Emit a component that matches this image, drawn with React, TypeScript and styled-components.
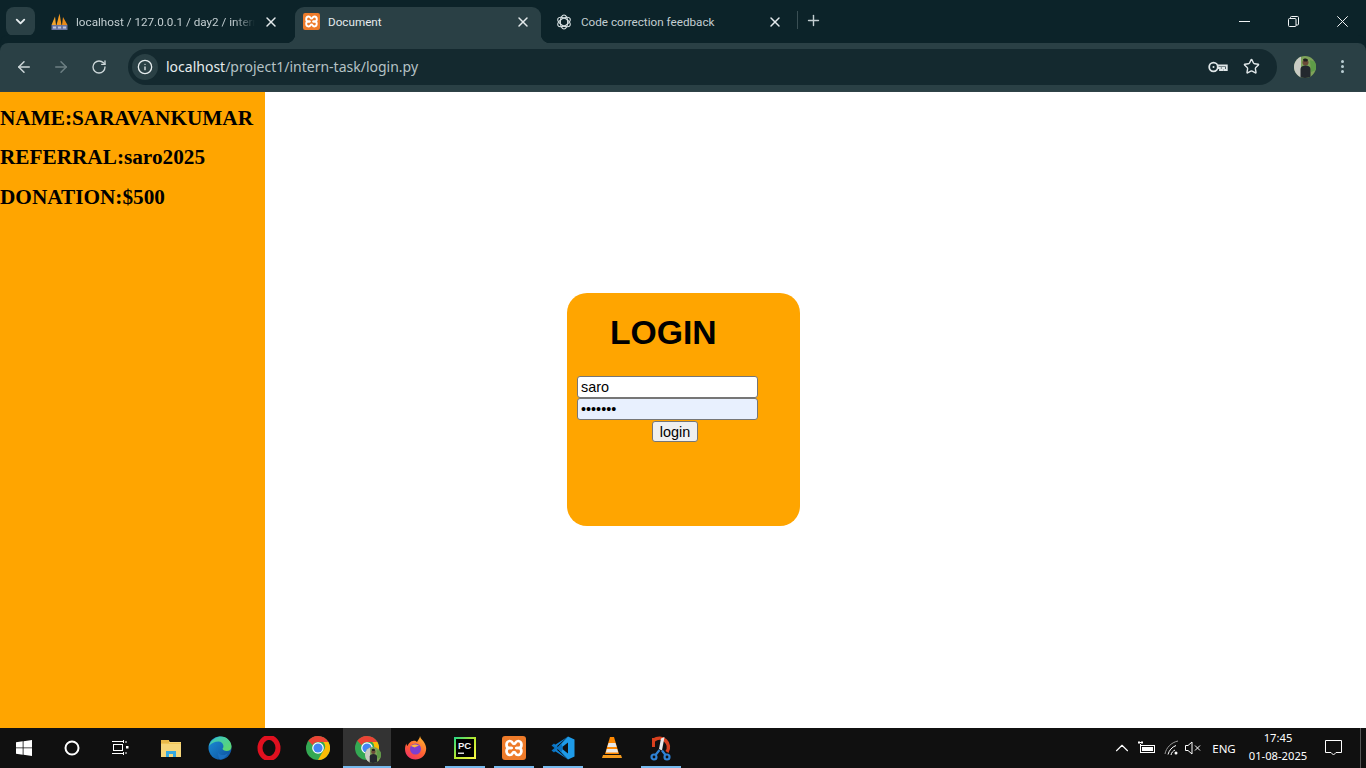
import React from "react";
import styled, { createGlobalStyle } from "styled-components";
import { ArrowLeft, ArrowRight, RotateCw, Info, Star, X, Plus, ChevronDown, ChevronUp } from "lucide-react";

const Global = createGlobalStyle`
  html, body { margin: 0; padding: 0; height: 100%; overflow: hidden; background: #fff; }
  #root { height: 100%; }
`;

const Shell = styled.div`
  width: 1366px;
  height: 768px;
  display: flex;
  flex-direction: column;
  font-family: "Noto Sans", "Open Sans", sans-serif;
`;

const TabStrip = styled.div`
  height: 43px;
  flex: none;
  background: #0c2329;
  display: flex;
  align-items: flex-end;
  padding-left: 6px;
  color: #d7e0e2;
`;

const TabSearch = styled.button`
  width: 29px;
  height: 29px;
  margin: 0 5px 7px 0;
  border: 0;
  padding: 0;
  border-radius: 8px;
  background: #2a4045;
  color: #e6ecee;
  display: flex;
  align-items: center;
  justify-content: center;
`;

const Tab = styled.div<{ $active?: boolean; $w: number; $pad: number; $gap: number; $right: number }>`
  position: relative;
  width: ${(p) => p.$w}px;
  height: 36px;
  box-sizing: border-box;
  padding: 0 ${(p) => p.$right}px 7px ${(p) => p.$pad}px;
  display: flex;
  align-items: center;
  gap: ${(p) => p.$gap}px;
  border-radius: 9px 9px 0 0;
  background: ${(p) => (p.$active ? "#2a4045" : "transparent")};
  color: ${(p) => (p.$active ? "#e4eaec" : "#c3ced1")};
  ${(p) =>
    p.$active
      ? `
    &::before, &::after {
      content: "";
      position: absolute;
      bottom: 0;
      width: 9px;
      height: 9px;
    }
    &::before { left: -9px; background: radial-gradient(circle at 0 0, transparent 9px, #2a4045 9.5px); }
    &::after { right: -9px; background: radial-gradient(circle at 100% 0, transparent 9px, #2a4045 9.5px); }
  `
      : ""}
`;

const TabTitle = styled.span<{ $fade?: boolean }>`
  flex: 1;
  min-width: 0;
  font-family: Roboto, "Noto Sans", sans-serif;
  font-size: 11.7px;
  line-height: 16px;
  white-space: nowrap;
  overflow: hidden;
  ${(p) =>
    p.$fade
      ? `-webkit-mask-image: linear-gradient(to right, #000 88%, transparent 100%); mask-image: linear-gradient(to right, #000 88%, transparent 100%);`
      : ""}
`;

const TabClose = styled.span`
  flex: none;
  width: 16px;
  height: 16px;
  display: flex;
  align-items: center;
  justify-content: center;
  color: #e4eaec;
`;

const TabDivider = styled.span`
  width: 1px;
  height: 18px;
  margin: 0 0 14px 2px;
  background: #3a4f54;
`;

const NewTab = styled.span`
  width: 30px;
  height: 18px;
  margin-bottom: 14px;
  display: flex;
  align-items: center;
  justify-content: center;
  color: #c3ced1;
`;

const WindowControls = styled.div`
  margin-left: auto;
  margin-right: -1px;
  height: 43px;
  display: flex;
  color: #f0f3f4;
`;

const WinButton = styled.span`
  width: 49px;
  height: 42px;
  display: flex;
  align-items: center;
  justify-content: center;
`;

const Toolbar = styled.div`
  height: 49px;
  flex: none;
  box-sizing: border-box;
  background: #2a4045;
  border-bottom: 1px solid #2f4247;
  border-radius: 8px 8px 0 0;
  box-shadow: 0 -8px 0 #0c2329;
  display: flex;
  align-items: center;
  padding: 0 0 1px 5px;
  color: #d0d9db;
`;

const NavButton = styled.span<{ $dim?: boolean }>`
  width: 37.5px;
  height: 34px;
  display: flex;
  align-items: center;
  justify-content: center;
  color: ${(p) => (p.$dim ? "#6d7f83" : "#cdd7d9")};
`;

const Omnibox = styled.div`
  margin-left: 10.5px;
  width: 1149px;
  height: 36px;
  flex: none;
  background: #14292f;
  border-radius: 18px;
  display: flex;
  align-items: center;
  padding: 0 17px 0 4px;
  box-sizing: border-box;
`;

const SiteInfo = styled.span`
  width: 26px;
  height: 26px;
  border-radius: 50%;
  background: #2a4045;
  color: #e6ecee;
  display: flex;
  align-items: center;
  justify-content: center;
`;

const Url = styled.span`
  margin-left: 8px;
  font-size: 14px;
  color: #e6ecee;
  flex: 1;
  small { font-size: inherit; color: #b5c2c5; }
`;

const OmniIcons = styled.span`
  display: flex;
  align-items: center;
  gap: 15px;
  color: #dfe6e8;
`;

const Avatar = styled.span`
  margin-left: 17px;
  width: 22px;
  height: 22px;
  border-radius: 50%;
  overflow: hidden;
  flex: none;
  display: block;
`;

const Kebab = styled.span`
  margin-left: 25px;
  display: flex;
  flex-direction: column;
  gap: 2px;
  i { display: block; width: 3px; height: 3px; border-radius: 50%; background: #b9cdd2; }
`;

const Page = styled.div`
  flex: 1;
  min-height: 0;
  display: flex;
  background: #fff;
`;

const Sidebar = styled.aside`
  width: 265px;
  flex: none;
  background: orange;
  box-sizing: border-box;
  padding-top: 14px;
  font-family: "Liberation Serif", "Times New Roman", serif;
  h3 {
    margin: 0 0 15.4px;
    font-size: 21.25px;
    line-height: 24px;
    font-weight: 700;
    color: #000;
    white-space: nowrap;
  }
`;

const Main = styled.main`
  flex: 1;
  padding: 201px 0 0 302px;
`;

const LoginCard = styled.form`
  width: 233px;
  height: 233px;
  box-sizing: border-box;
  background: orange;
  border-radius: 20px;
  padding: 0 10px;
  font-family: "Liberation Sans", Arial, sans-serif;
  h1 {
    margin: 0;
    padding: 19px 0 0 33px;
    height: 83px;
    box-sizing: border-box;
    font-size: 33.7px;
    line-height: 40px;
    font-weight: 700;
    color: #000;
  }
`;

const Field = styled.input<{ $filled?: boolean }>`
  display: block;
  box-sizing: border-box;
  width: 181px;
  height: 22px;
  margin: 0;
  padding: 1px 3px;
  border: 1px solid #767676;
  border-radius: 3px;
  background: ${(p) => (p.$filled ? "#e8f0fe" : "#fff")};
  font-family: "Liberation Sans", Arial, sans-serif;
  font-size: 14.4px;
  color: #000;
  outline: none;
`;

const Submit = styled.button`
  display: block;
  box-sizing: border-box;
  width: 46px;
  height: 21px;
  margin: 1px 0 0 75px;
  padding: 0;
  border: 1px solid #767676;
  border-radius: 3px;
  background: #efefef;
  font-family: "Liberation Sans", Arial, sans-serif;
  font-size: 14.4px;
  color: #000;
`;

const Taskbar = styled.footer`
  height: 40px;
  flex: none;
  background: #101010;
  display: flex;
  align-items: stretch;
  color: #fff;
`;

const SystemSlot = styled.span<{ $after?: number }>`
  width: 48px;
  margin-right: ${(p) => p.$after ?? 0}px;
  flex: none;
  display: flex;
  align-items: center;
  justify-content: center;
`;

const AppSlot = styled.span<{ $running?: boolean; $active?: boolean }>`
  position: relative;
  width: 48px;
  margin-right: 1px;
  flex: none;
  display: flex;
  align-items: center;
  justify-content: center;
  background: ${(p) => (p.$active ? "#333333" : "transparent")};
  ${(p) =>
    p.$running
      ? `&::after { content: ""; position: absolute; bottom: 0; height: 2px; left: ${p.$active ? 0 : 4}px; right: ${
          p.$active ? 0 : 4
        }px; background: #76b9ed; }`
      : ""}
`;

const Tray = styled.div`
  margin-left: auto;
  display: flex;
  align-items: center;
  font-family: "Noto Sans", sans-serif;
  color: #fff;
`;

const TrayIcon = styled.span<{ $w: number }>`
  width: ${(p) => p.$w}px;
  flex: none;
  display: flex;
  align-items: center;
  justify-content: center;
`;

const Lang = styled.span`
  width: 32px;
  margin: 0 0 0 6px;
  text-align: center;
  font-size: 11.5px;
`;

const Clock = styled.span`
  width: 64px;
  margin: -2px 0 0 6px;
  text-align: center;
  font-size: 11.2px;
  line-height: 18px;
  white-space: nowrap;
`;

const Notify = styled.span`
  width: 28px;
  margin-left: 9px;
  display: flex;
  justify-content: center;
`;

const DesktopEdge = styled.span`
  width: 1px;
  height: 40px;
  margin-left: 13px;
  margin-right: 5px;
  background: #555;
`;

const ProfileWrap = styled.span`
  position: relative;
  display: flex;
`;

const BadgeFace = styled.span`
  position: absolute;
  right: -2px;
  bottom: -3px;
  width: 16px;
  height: 16px;
  border-radius: 50%;
  overflow: hidden;
  svg { width: 16px; height: 16px; display: block; }
`;

const XamppIcon = ({ s }: { s: number }) => (
  <svg width={s} height={s} viewBox="0 0 24 24">
    <rect x="0" y="0" width="24" height="24" rx="3" fill="#ee7b2a" />
    <g fill="none" stroke="#fff" strokeWidth="2.700" strokeLinejoin="round" strokeLinecap="round">
      <path d="M9.500 12H7.600C5.800 12 4.500 10.600 4.500 8.700S5.900 5 7.800 5c1.500 0 2.300.7 2.800 1.800.3.600.8 1 1.400 1s1.100-.4 1.400-1C14 5.700 14.700 5 16.200 5c1.900 0 3.300 1.800 3.300 3.700S18.200 12 16.400 12h-1.900" />
      <path d="M9.500 12H7.600C5.800 12 4.500 13.400 4.500 15.300S5.900 19 7.800 19c1.500 0 2.300-.7 2.800-1.800.3-.6.800-1 1.400-1s1.100.4 1.400 1c.5 1.100 1.200 1.800 2.700 1.800 1.900 0 3.300-1.800 3.300-3.700S18.200 12 16.400 12h-1.900" />
    </g>
  </svg>
);

const PmaIcon = () => (
  <svg width="17" height="18" viewBox="0 0 17 18">
    <path d="M0.500 12 4 3.500 5 12z" fill="#f2a32c" />
    <path d="M5.500 12 8.500 0.500 10.500 12z" fill="#f49a20" />
    <path d="M11 12 12 4 16.500 12z" fill="#e8891a" />
    <rect x="0.500" y="12" width="16" height="5" fill="#69739f" />
    <rect x="2" y="13.500" width="3" height="2" fill="#b9c2dd" />
    <rect x="7" y="13.500" width="3" height="2" fill="#b9c2dd" />
    <rect x="12" y="13.500" width="3" height="2" fill="#b9c2dd" />
  </svg>
);

const GptIcon = () => (
  <svg width="16" height="16" viewBox="0 0 24 24" fill="none" stroke="#d6dfe1" strokeWidth="1.700">
    <ellipse cx="12" cy="12" rx="5.500" ry="10.500" />
    <ellipse cx="12" cy="12" rx="5.500" ry="10.500" transform="rotate(60 12 12)" />
    <ellipse cx="12" cy="12" rx="5.500" ry="10.500" transform="rotate(120 12 12)" />
  </svg>
);

const KeyIcon = () => (
  <svg width="20" height="14" viewBox="0 0 20 14" fill="none" stroke="currentColor" strokeWidth="1.800">
    <circle cx="5.500" cy="7" r="4.300" />
    <circle cx="5.500" cy="7" r="1" fill="currentColor" stroke="none" />
    <path d="M9.800 5.500h9v4.500h-2.500V8h-2v2H12V8H9.500" />
  </svg>
);

const RestoreIcon = () => (
  <svg width="11" height="11" viewBox="0 0 11 11" fill="none" stroke="currentColor" strokeWidth="1">
    <rect x="0.500" y="2.500" width="7.500" height="8" rx="1" />
    <path d="M2.500 2.500V1.500a1 1 0 0 1 1-1H9.500a1 1 0 0 1 1 1V8a1 1 0 0 1-1 1H8" />
  </svg>
);

const MinimizeIcon = () => (
  <svg width="11" height="1" viewBox="0 0 11 1">
    <rect width="11" height="1" fill="currentColor" />
  </svg>
);

const ThinX = () => (
  <svg width="11" height="11" viewBox="0 0 11 11" stroke="currentColor" strokeWidth="1">
    <path d="M.3.300l10.400 10.400M10.700.300L.3 10.700" />
  </svg>
);

const AvatarArt = () => (
  <svg width="22" height="22" viewBox="0 0 22 22">
    <rect width="22" height="22" fill="#7fa35a" />
    <path d="M0 0h7v22H0z" fill="#c9cbc4" />
    <path d="M16 4l6 2v8l-5 2z" fill="#5e9c48" />
    <circle cx="11.500" cy="6.500" r="3" fill="#6b4a38" />
    <path d="M9 3.500c1-1.500 4-1.500 5 .5l-1 1.500h-3z" fill="#20201f" />
    <path d="M6.500 22v-9c0-2 2-3.500 5-3.500s5 1.500 5 3.500v9z" fill="#23282e" />
  </svg>
);

const WindowsLogo = () => (
  <svg width="16" height="16" viewBox="0 0 16 16" fill="#fff">
    <path d="M0 2.300 6.700 1.300V7.500H0zM7.500 1.200 16 0V7.500H7.500zM0 8.300H6.700V14.700L0 13.700zM7.500 8.300H16V16L7.500 14.800z" />
  </svg>
);

const Cortana = () => (
  <svg width="16" height="16" viewBox="0 0 16 16">
    <circle cx="8" cy="8" r="6.500" fill="none" stroke="#fff" strokeWidth="2" />
  </svg>
);

const TaskView = () => (
  <svg width="17" height="16" viewBox="0 0 17 16" fill="none" stroke="#fff" strokeWidth="1">
    <rect x="1.500" y="4.500" width="9" height="6" />
    <path d="M0 1.500h11.500M11.500 0v3M0 13.500h11.500M11.500 12v3" />
    <path d="M14 1v2M14 12v2" />
    <rect x="14" y="6" width="2.500" height="2.500" fill="#fff" stroke="none" />
  </svg>
);

const Explorer = () => (
  <svg width="22" height="20" viewBox="0 0 22 20">
    <path d="M1 2h7l2 2h11v15H1z" fill="#f6d67a" />
    <rect x="1" y="2" width="8" height="3" fill="#e9b949" />
    <path d="M6 19v-6h10v6h-3v-3H9v3z" fill="#36a9e1" />
    <rect x="1" y="5" width="20" height="1" fill="#f0c658" />
  </svg>
);

const Edge = () => (
  <svg width="24" height="24" viewBox="0 0 24 24">
    <defs>
      <linearGradient id="eg" x1="0" y1="0" x2="1" y2="1">
        <stop offset="0" stopColor="#36c5c9" />
        <stop offset="1" stopColor="#63d863" />
      </linearGradient>
      <linearGradient id="eb" x1="0" y1="0" x2="1" y2="1">
        <stop offset="0" stopColor="#1c8fd8" />
        <stop offset="1" stopColor="#0d4f9c" />
      </linearGradient>
    </defs>
    <circle cx="12" cy="12" r="11.500" fill="url(#eb)" />
    <path d="M1 10C3 3 9 .5 13 .5c6 0 10.500 5 10.500 10 0 3-2 4.500-5 4.500-2 0-4-1-4-2.500 2-1 1-7-4-7-4 0-7 1.500-9.500 4.500z" fill="url(#eg)" />
    <path d="M10 10c-2 2-1 8 4 9 2.500.5 5-1 6-2-2 4-5 6.500-8 6.500-1 0-3-6-2-13.500z" fill="#1a6fbf" />
  </svg>
);

const Opera = () => (
  <svg width="24" height="24" viewBox="0 0 24 24">
    <ellipse cx="12" cy="12" rx="9" ry="10.500" fill="none" stroke="#e0101f" strokeWidth="5" />
    <ellipse cx="12" cy="12" rx="3.500" ry="8" fill="#101010" />
  </svg>
);

const Chrome = () => (
  <svg width="24" height="24" viewBox="0 0 24 24">
    <circle cx="12" cy="12" r="12" fill="#34a853" />
    <path d="M12 0a12 12 0 0 1 10.400 6H12a6 6 0 0 0-5.300 3.200L2.300 4.800A12 12 0 0 1 12 0z" fill="#ea4335" />
    <path d="M22.400 6A12 12 0 0 1 12 24l5.200-9A6 6 0 0 0 17.200 6z" fill="#fbbc05" />
    <circle cx="12" cy="12" r="5.800" fill="#fff" />
    <circle cx="12" cy="12" r="4.600" fill="#4285f4" />
  </svg>
);

const Firefox = () => (
  <svg width="24" height="24" viewBox="0 0 24 24">
    <defs>
      <linearGradient id="ff" x1="0.800" y1="0" x2="0.200" y2="1">
        <stop offset="0" stopColor="#ffb52e" />
        <stop offset="0.600" stopColor="#ff5a36" />
        <stop offset="1" stopColor="#f0316a" />
      </linearGradient>
    </defs>
    <path d="M16 0c.5 3 3 4 4.500 7 1.500 3 2 5 1.500 7.500C21 20 17 23.500 11.500 23.500 5.500 23.500 1 19 1 13c0-2 .5-4 1.500-5.500 0 1.500.5 2 1 2.500C4.500 7 7 5 9 5c2.500-.5 3 .5 4 1 1-2 3-4 3-6z" fill="url(#ff)" />
    <circle cx="11.500" cy="13" r="5.500" fill="#7d3fd0" />
    <path d="M7 10c2-2 6-2 8 0-1.500 0-3 .5-4 1.500-1.500-.5-3-1-4-1.500z" fill="#ffbb3a" />
  </svg>
);

const PyCharm = () => (
  <svg width="22" height="22" viewBox="0 0 22 22">
    <defs>
      <linearGradient id="pc" x1="0" y1="0" x2="1" y2="1">
        <stop offset="0" stopColor="#21d789" />
        <stop offset="0.500" stopColor="#b8e82e" />
        <stop offset="1" stopColor="#fcf84a" />
      </linearGradient>
    </defs>
    <rect width="22" height="22" fill="url(#pc)" />
    <rect x="2" y="2" width="18" height="18" fill="#000" />
    <text x="4" y="12" fontFamily="Liberation Sans, sans-serif" fontSize="9.500" fontWeight="700" fill="#f2f2f2">PC</text>
    <rect x="4" y="15.500" width="6" height="1.500" fill="#d8d8d8" />
  </svg>
);

const VSCode = () => (
  <svg width="24" height="24" viewBox="0 0 24 24">
    <path d="M17 0.500 23.500 3.500v17L17 23.500 6 12z" fill="#1e9be8" />
    <path d="M17 6.500v11L10 12z" fill="#101010" />
    <path d="M3 7.500 0.500 9.500 3.500 12 .5 14.500 3 16.500 7 13l3.500 3 1.500-4-1.500-4L7 11z" fill="#0a72c0" />
    <path d="M17 .5 5 11l-2-1.500L17 .5z" fill="#0f7fd0" />
    <path d="M17 23.500 5 13l-2 1.500L17 23.500z" fill="#0f7fd0" />
  </svg>
);

const Vlc = () => (
  <svg width="20" height="24" viewBox="0 0 20 24">
    <path d="M8 1h4l5 17H3z" fill="#ff8800" />
    <path d="M6.500 7h7l1.200 4H5.300zM4.800 13h10.400l1 3.500H3.800z" fill="#e8e8e8" />
    <path d="M1 19h18l1 3H0z" fill="#f59a1c" />
  </svg>
);

const Snipping = () => (
  <svg width="22" height="26" viewBox="0 0 22 26">
    <path d="M4 5a9 9 0 0 1 13 12" fill="none" stroke="#d8401e" strokeWidth="3.600" />
    <path d="M3.500 3v9" stroke="#d8401e" strokeWidth="3" />
    <path d="M11 3.500 14.500 2 12 15.500 9 14z" fill="#e8e8e8" />
    <path d="M9.500 15 5.500 20M12 15.500l3.500 4.500" stroke="#2f83d6" strokeWidth="2.200" />
    <circle cx="4" cy="22" r="2.500" fill="none" stroke="#2f83d6" strokeWidth="2.200" />
    <circle cx="17" cy="22" r="2.500" fill="none" stroke="#2f83d6" strokeWidth="2.200" />
  </svg>
);

const Battery = () => (
  <svg width="18" height="14" viewBox="0 0 18 14" fill="none" stroke="#fff">
    <rect x="2.500" y="4.500" width="14" height="7" />
    <rect x="4" y="6" width="11" height="4" fill="#fff" stroke="none" />
    <path d="M0 1.500h5M1 0v3M4 0v3M2.500 3v2" />
  </svg>
);

const Wifi = () => (
  <svg width="16" height="16" viewBox="0 0 16 16" fill="none" stroke="#9a9a9a">
    <path d="M1 14C2 8 7 2.500 14 1" />
    <path d="M4 14.500C5 10.500 8 7 12 5.500" stroke="#fff" />
    <path d="M7 15c.5-2.500 2-4 4-5" stroke="#fff" />
    <circle cx="12" cy="13" r="1.500" fill="#fff" stroke="none" />
  </svg>
);

const Volume = () => (
  <svg width="16" height="14" viewBox="0 0 16 14" fill="none" stroke="#fff">
    <path d="M.5 4.500h2.500L7 1v12L3 9.500H.5z" />
    <path d="M10 4.500l5 5M15 4.500l-5 5" />
  </svg>
);

const NotifyIcon = () => (
  <svg width="17" height="16" viewBox="0 0 17 16" fill="none" stroke="#fff">
    <path d="M.5.500h16v12h-5.500l-2.500 2.500L6 12.500H.500z" />
  </svg>
);

export default function App() {
  return (
    <Shell>
      <Global />
      <TabStrip>
        <TabSearch type="button">
          <ChevronDown size={15} strokeWidth={3} />
        </TabSearch>
        <Tab $w={255} $pad={11} $gap={8} $right={16}>
          <PmaIcon />
          <TabTitle $fade>localhost / 127.0.0.1 / day2 / intern</TabTitle>
          <TabClose>
            <X size={16} strokeWidth={2.2} />
          </TabClose>
        </Tab>
        <Tab $active $w={246} $pad={8} $gap={8} $right={10}>
          <XamppIcon s={17} />
          <TabTitle>Document</TabTitle>
          <TabClose>
            <X size={16} strokeWidth={2.2} />
          </TabClose>
        </Tab>
        <Tab $w={254} $pad={15} $gap={9} $right={12}>
          <GptIcon />
          <TabTitle>Code correction feedback</TabTitle>
          <TabClose>
            <X size={16} strokeWidth={2.2} />
          </TabClose>
        </Tab>
        <TabDivider />
        <NewTab>
          <Plus size={17} strokeWidth={2} />
        </NewTab>
        <WindowControls>
          <WinButton>
            <MinimizeIcon />
          </WinButton>
          <WinButton>
            <RestoreIcon />
          </WinButton>
          <WinButton>
            <ThinX />
          </WinButton>
        </WindowControls>
      </TabStrip>
      <Toolbar>
        <NavButton>
          <ArrowLeft size={18} strokeWidth={2} />
        </NavButton>
        <NavButton $dim>
          <ArrowRight size={18} strokeWidth={2} />
        </NavButton>
        <NavButton>
          <RotateCw size={16} strokeWidth={2} />
        </NavButton>
        <Omnibox>
          <SiteInfo>
            <Info size={16} strokeWidth={2} />
          </SiteInfo>
          <Url>
            localhost<small>/project1/intern-task/login.py</small>
          </Url>
          <OmniIcons>
            <KeyIcon />
            <Star size={17} strokeWidth={2} />
          </OmniIcons>
        </Omnibox>
        <Avatar>
          <AvatarArt />
        </Avatar>
        <Kebab>
          <i />
          <i />
          <i />
        </Kebab>
      </Toolbar>
      <Page>
        <Sidebar>
          <h3>NAME:SARAVANKUMAR</h3>
          <h3>REFERRAL:saro2025</h3>
          <h3>DONATION:$500</h3>
        </Sidebar>
        <Main>
          <LoginCard onSubmit={(e) => e.preventDefault()}>
            <h1>LOGIN</h1>
            <Field type="text" defaultValue="saro" />
            <Field $filled type="password" defaultValue="saro123" />
            <Submit type="submit">login</Submit>
          </LoginCard>
        </Main>
      </Page>
      <Taskbar>
        <SystemSlot>
          <WindowsLogo />
        </SystemSlot>
        <SystemSlot>
          <Cortana />
        </SystemSlot>
        <SystemSlot $after={3}>
          <TaskView />
        </SystemSlot>
        <AppSlot>
          <Explorer />
        </AppSlot>
        <AppSlot>
          <Edge />
        </AppSlot>
        <AppSlot>
          <Opera />
        </AppSlot>
        <AppSlot>
          <Chrome />
        </AppSlot>
        <AppSlot $running $active>
          <ProfileWrap>
            <Chrome />
            <BadgeFace>
              <AvatarArt />
            </BadgeFace>
          </ProfileWrap>
        </AppSlot>
        <AppSlot>
          <Firefox />
        </AppSlot>
        <AppSlot $running>
          <PyCharm />
        </AppSlot>
        <AppSlot $running>
          <XamppIcon s={24} />
        </AppSlot>
        <AppSlot $running>
          <VSCode />
        </AppSlot>
        <AppSlot>
          <Vlc />
        </AppSlot>
        <AppSlot $running>
          <Snipping />
        </AppSlot>
        <Tray>
          <TrayIcon $w={24}>
            <ChevronUp size={22} strokeWidth={1.2} />
          </TrayIcon>
          <TrayIcon $w={26}>
            <Battery />
          </TrayIcon>
          <TrayIcon $w={24}>
            <Wifi />
          </TrayIcon>
          <TrayIcon $w={18}>
            <Volume />
          </TrayIcon>
          <Lang>ENG</Lang>
          <Clock>
            17:45
            <br />
            01-08-2025
          </Clock>
          <Notify>
            <NotifyIcon />
          </Notify>
          <DesktopEdge />
        </Tray>
      </Taskbar>
    </Shell>
  );
}
